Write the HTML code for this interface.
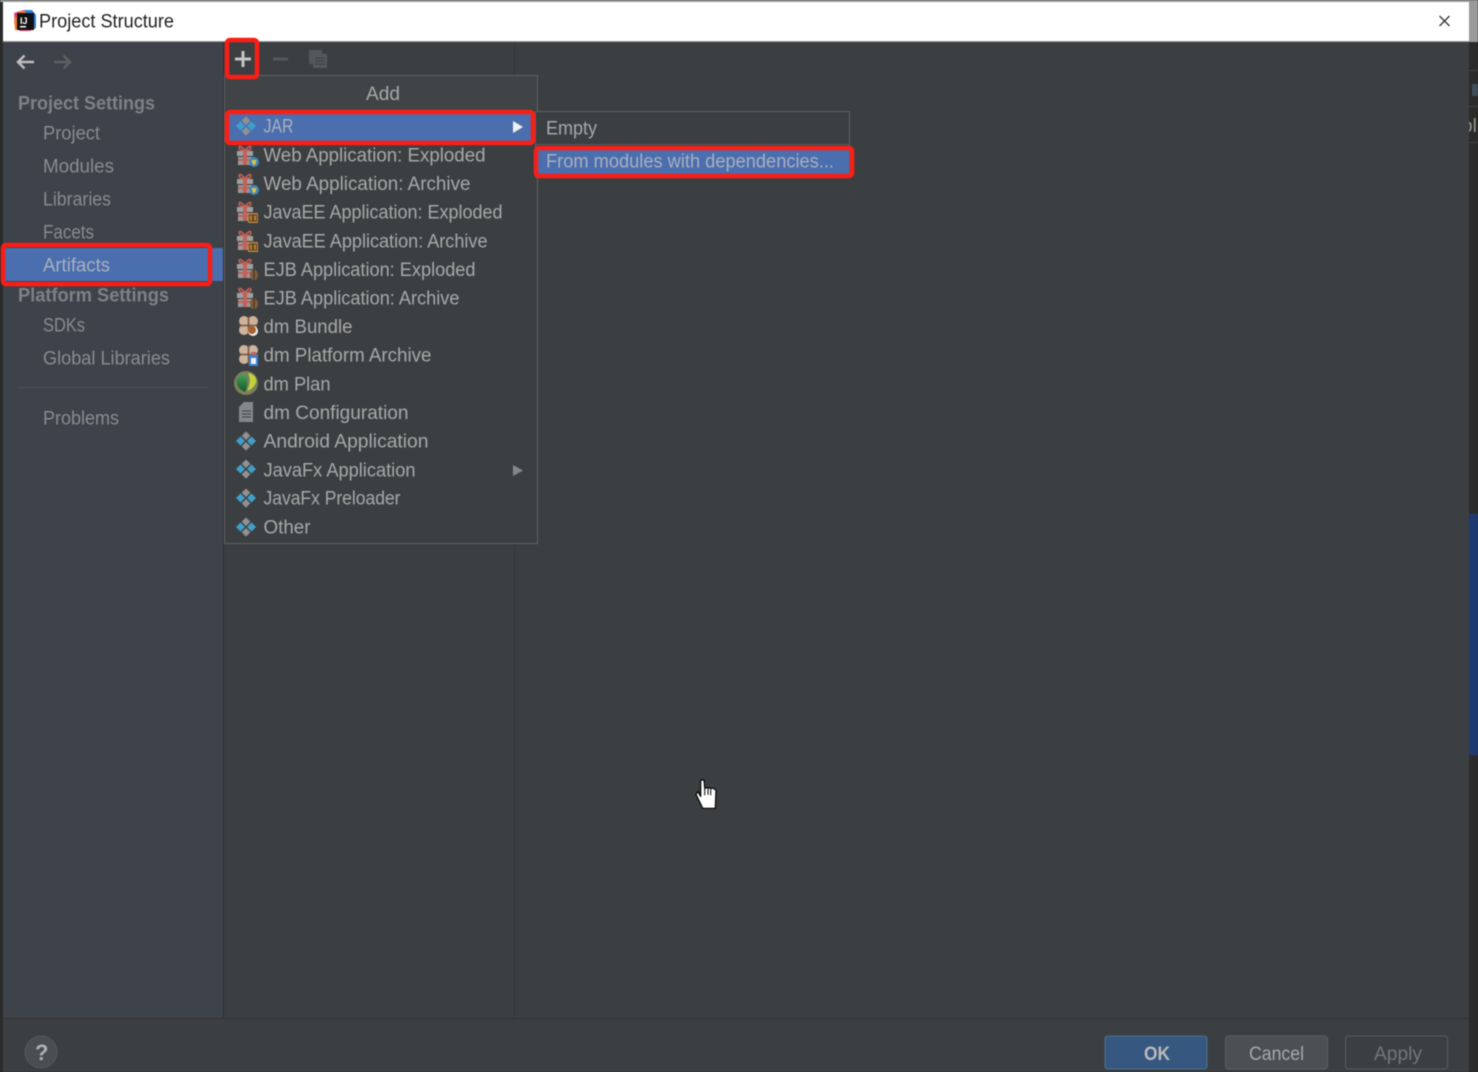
<!DOCTYPE html>
<html lang="en">
<head>
<meta charset="utf-8">
<title>Project Structure</title>
<style>
html,body{margin:0;padding:0;width:1478px;height:1072px;overflow:hidden;background:#2b2b2b}
svg{display:block}
#root{filter:blur(.45px)}
text{font-family:"Liberation Sans",sans-serif;font-size:19px;fill:#a8a8a8}
.d{fill:#8a8c8e}
.h{fill:#7f8184;font-weight:bold}
.s{fill:#a9b0bd}
</style>
</head>
<body>
<svg id="root" width="1478" height="1072" viewBox="0 0 1478 1072" xmlns="http://www.w3.org/2000/svg">
<defs>
<g id="dia">
  <path d="M10 .5l4.300 4.300L10 9.100 5.700 4.800z" fill="#8f9193"/>
  <path d="M10 11l4.300 4.300L10 19.600l-4.300-4.300z" fill="#8f9193"/>
  <path d="M0 10l4.500-4.500L9 10l-4.500 4.500z" fill="#3f9fcb"/>
  <path d="M11 10l4.500-4.500L20 10l-4.500 4.500z" fill="#3f9fcb"/>
</g>
<g id="gift">
  <rect x="0" y="6" width="16" height="5" fill="#a0a0a0"/>
  <rect x="1" y="12" width="14" height="8" fill="#9a9a9a"/>
  <rect x="6" y="6" width="4" height="14" fill="#c2605a"/>
  <rect x="1" y="14" width="14" height="2" fill="#c2605a"/>
  <path d="M8 5.500C4 .5 1 .5 2.500 4c.5 1.200 3.500 1.500 5.500 1.500zM8 5.500c4-5 7-5 5.500-1.500-.5 1.200-3.500 1.500-5.500 1.500z" fill="none" stroke="#c2605a" stroke-width="1.600"/>
</g>
<g id="web">
  <use href="#gift"/>
  <circle cx="17" cy="17" r="5" fill="#3a88c4"/>
  <path d="M14.500 15h5l-1 4-2 1.500-1-2z" fill="#e8c23a"/>
</g>
<g id="ee">
  <use href="#gift"/>
  <rect x="11" y="12" width="10" height="10" fill="#b9843f"/>
  <rect x="12.500" y="14" width="3" height="6" fill="none" stroke="#5a4020" stroke-width="1"/>
  <rect x="16.500" y="14" width="3" height="6" fill="none" stroke="#5a4020" stroke-width="1"/>
</g>
<g id="ejb">
  <use href="#gift"/>
  <ellipse cx="17" cy="17" rx="4" ry="5.500" fill="#7d5c3a"/>
  <path d="M17 11.500v11" stroke="#3c3020" stroke-width="1"/>
</g>
<g id="ball">
  <circle cx="6" cy="5" r="5" fill="#cdb29c"/>
  <circle cx="15" cy="5" r="5" fill="#cdb29c"/>
  <circle cx="6" cy="14" r="5" fill="#cdb29c"/>
  <circle cx="14" cy="13" r="5" fill="#cdb29c"/>
  <path d="M10.500 0v19M1 9.500h19" stroke="#77553f" stroke-width="1.500"/>
</g>
<linearGradient id="gl" x1="0" y1="0" x2="0" y2="1"><stop offset="0" stop-color="#4fa35a"/><stop offset="1" stop-color="#0e5a2a"/></linearGradient>
</defs>

<!-- base -->
<rect width="1478" height="1072" fill="#2b2b2b"/>
<rect x="3" y="42" width="1466" height="1030" fill="#3c3f41"/>
<rect x="3" y="42" width="220" height="976" fill="#3d424b"/>
<rect x="223" y="42" width="1" height="976" fill="#323232"/>
<rect x="514" y="42" width="1" height="976" fill="#343638"/>
<rect x="3" y="1018" width="1466" height="1" fill="#313335"/>

<!-- right strip -->
<rect x="1469" y="514" width="9" height="241" fill="#1f3a70"/>
<rect x="1469" y="0" width="9" height="42" fill="#9a9a9a"/>
<rect x="1472" y="84" width="6" height="12" fill="#3d4f5a"/>
<rect x="1469" y="70" width="9" height="1" fill="#444"/>
<rect x="1469" y="106" width="9" height="1" fill="#444"/>
<rect x="1469" y="142" width="9" height="1" fill="#444"/>
<svg x="1469" y="110" width="9" height="30" viewBox="0 0 9 30"><text x="-7" y="22" style="fill:#9a9488">ol</text></svg>

<!-- title bar -->
<rect x="0" y="0" width="1469" height="2" fill="#9c9c9c"/>
<rect x="3" y="2" width="1466" height="39" fill="#ffffff"/>
<rect x="3" y="41" width="1466" height="1" fill="#9a9a9a"/>
<path d="M14 13l6-2 4-1 4 1 3 1 5 3v13l-6 3H20l-5-3z" fill="#e8407a"/>
<path d="M24 10h8l4 5v12l-4 3z" fill="#2f7fe0"/>
<path d="M14 20l6-9h6l-9 19h-2z" fill="#f4792a"/>
<rect x="17" y="13" width="17" height="17" fill="#111"/>
<text x="20" y="24" style="fill:#fff;font-size:9px;font-weight:bold">IJ</text>
<rect x="20" y="26" width="6" height="1.500" fill="#fff"/>
<text x="39" y="27.500" textLength="135" lengthAdjust="spacingAndGlyphs" style="fill:#222">Project Structure</text>
<path d="M1439.500 16l10 10M1449.500 16l-10 10" stroke="#333" stroke-width="1.300" fill="none"/>

<!-- nav arrows -->
<path d="M34 62H18M24.500 55.500L18 62l6.500 6.500" stroke="#bdbdbd" stroke-width="2.500" fill="none"/>
<path d="M54 62h16M63.500 55.500L70 62l-6.500 6.500" stroke="#5c5f62" stroke-width="2.500" fill="none"/>

<!-- sidebar -->
<rect x="3" y="248" width="220" height="33" fill="#4b6eaf"/>
<text x="18" y="109.500" textLength="137" lengthAdjust="spacingAndGlyphs" class="h">Project Settings</text>
<text x="43" y="139.500" textLength="57" lengthAdjust="spacingAndGlyphs" class="d">Project</text>
<text x="43" y="172.500" textLength="71" lengthAdjust="spacingAndGlyphs" class="d">Modules</text>
<text x="43" y="205.500" textLength="68" lengthAdjust="spacingAndGlyphs" class="d">Libraries</text>
<text x="43" y="238.500" textLength="51" lengthAdjust="spacingAndGlyphs" class="d">Facets</text>
<text x="43" y="271.500" textLength="67" lengthAdjust="spacingAndGlyphs" class="s">Artifacts</text>
<text x="18" y="301.500" textLength="151" lengthAdjust="spacingAndGlyphs" class="h">Platform Settings</text>
<text x="43" y="331.500" textLength="42" lengthAdjust="spacingAndGlyphs" class="d">SDKs</text>
<text x="43" y="364.500" textLength="127" lengthAdjust="spacingAndGlyphs" class="d">Global Libraries</text>
<rect x="18" y="387" width="190" height="1" fill="#4a4e55"/>
<text x="43" y="424.500" textLength="76" lengthAdjust="spacingAndGlyphs" class="d">Problems</text>

<!-- toolbar -->
<path d="M243 51v16M235 59h16" stroke="#c4c4c4" stroke-width="3" fill="none"/>
<path d="M273 59h15" stroke="#55585b" stroke-width="3" fill="none"/>
<path d="M309 50h13v4h5v14h-14v-4h-4z" fill="#55585b"/>
<path d="M315 58h10M315 61h10M315 64h10" stroke="#3c3f41" stroke-width="1"/>

<!-- popup menu -->
<rect x="224.500" y="75.500" width="313" height="468" fill="#3c3f41" stroke="#5e6062"/>
<rect x="225" y="76" width="312" height="34" fill="#414446"/>
<text x="366" y="100" textLength="34" lengthAdjust="spacingAndGlyphs">Add</text>
<rect x="228" y="112" width="305" height="31" fill="#4b6eaf"/>

<use href="#dia" x="236" y="116"/>
<text x="263.500" y="132.500" textLength="30" lengthAdjust="spacingAndGlyphs" class="s">JAR</text>
<path d="M513 121l10 6-10 6z" fill="#f0f0f0"/>

<use href="#web" x="237" y="145"/>
<text x="263.500" y="161.500" textLength="222" lengthAdjust="spacingAndGlyphs">Web Application: Exploded</text>
<use href="#web" x="237" y="173"/>
<text x="263.500" y="190" textLength="207" lengthAdjust="spacingAndGlyphs">Web Application: Archive</text>
<use href="#ee" x="237" y="201"/>
<text x="263.500" y="218.500" textLength="239" lengthAdjust="spacingAndGlyphs">JavaEE Application: Exploded</text>
<use href="#ee" x="237" y="230"/>
<text x="263.500" y="247.500" textLength="224" lengthAdjust="spacingAndGlyphs">JavaEE Application: Archive</text>
<use href="#ejb" x="237" y="258"/>
<text x="263.500" y="276" textLength="212" lengthAdjust="spacingAndGlyphs">EJB Application: Exploded</text>
<use href="#ejb" x="237" y="287"/>
<text x="263.500" y="304.500" textLength="196" lengthAdjust="spacingAndGlyphs">EJB Application: Archive</text>

<use href="#ball" x="238" y="316"/>
<circle cx="253" cy="331" r="5" fill="#f0f0f0"/><circle cx="252" cy="330" r="4" fill="#a5622f"/>
<text x="263.500" y="333" textLength="89" lengthAdjust="spacingAndGlyphs">dm Bundle</text>
<use href="#ball" x="238" y="345"/>
<rect x="249" y="355" width="9" height="11" fill="#3b7fd0"/><rect x="251" y="358" width="5" height="6" fill="#f0f0f0"/><rect x="251" y="352" width="5" height="3" fill="#c2605a"/>
<text x="263.500" y="361.500" textLength="168" lengthAdjust="spacingAndGlyphs">dm Platform Archive</text>

<circle cx="246" cy="383" r="12" fill="#7d7f5c"/>
<path d="M245 373c-7 2-9 6-8 11 1 4 4 6 8 8 3-6 3-13 0-19z" fill="url(#gl)"/>
<path d="M248 373c6 1 9 5 8 9-1 4-4 7-9 9 3-6 4-12 1-18z" fill="#c4d23a"/>
<text x="263.500" y="390.500" textLength="67" lengthAdjust="spacingAndGlyphs">dm Plan</text>

<path d="M244 402h9v20h-14v-15z" fill="#85888a"/>
<path d="M242 411h9M242 414h9M242 417h9" stroke="#3c3f41" stroke-width="1"/>
<text x="263.500" y="419" textLength="145" lengthAdjust="spacingAndGlyphs">dm Configuration</text>

<use href="#dia" x="236" y="431"/>
<text x="263.500" y="447.500" textLength="165" lengthAdjust="spacingAndGlyphs">Android Application</text>
<use href="#dia" x="236" y="459"/>
<text x="263.500" y="476.500" textLength="152" lengthAdjust="spacingAndGlyphs">JavaFx Application</text>
<path d="M513 465l10 5.500-10 5.500z" fill="#85888a"/>
<use href="#dia" x="236" y="488"/>
<text x="263.500" y="504.500" textLength="137" lengthAdjust="spacingAndGlyphs">JavaFx Preloader</text>
<use href="#dia" x="236" y="517"/>
<text x="263.500" y="533.500" textLength="47" lengthAdjust="spacingAndGlyphs">Other</text>

<!-- submenu -->
<rect x="535.500" y="111.500" width="314" height="66" fill="#3c3f41" stroke="#5e6062"/>
<rect x="536" y="144" width="313" height="1" fill="#55585a"/>
<text x="546" y="134.500" textLength="51" lengthAdjust="spacingAndGlyphs">Empty</text>
<rect x="537" y="150" width="312" height="24" fill="#4b6eaf"/>
<text x="546" y="167.500" textLength="288" lengthAdjust="spacingAndGlyphs" class="s">From modules with dependencies...</text>

<!-- red annotation boxes -->
<g fill="none" stroke="#fa1f16" stroke-width="4.500">
  <rect x="227" y="40" width="30" height="37" rx="3"/>
  <rect x="3" y="245" width="207" height="39" rx="3"/>
  <rect x="227" y="112" width="306" height="31" rx="3"/>
  <rect x="536" y="148" width="316" height="28" rx="3"/>
</g>

<!-- hand cursor -->
<path d="M700.700 780h3.300l.7 8.300 3.300-.6 2.700.6h2.600l2.700 2-.7 18h-12.600l-6.700-14 2-2.600 2.700 5z" fill="#fff" stroke="#000" stroke-width="1.200"/>
<path d="M704.700 788.300v7M708 787.700v7M710.700 788.300v7" stroke="#000" stroke-width="1" fill="none"/>

<!-- footer -->
<circle cx="41" cy="1052" r="16" fill="#4b4e50" stroke="#55585a"/>
<text x="35" y="1060" style="font-size:22px;font-weight:bold;fill:#b0b0b0">?</text>

<rect x="1105" y="1036" width="102" height="33" rx="3" fill="#365880" stroke="#4c708c"/>
<text x="1144" y="1060" textLength="26" lengthAdjust="spacingAndGlyphs" style="font-weight:bold;fill:#bbbbbb">OK</text>
<rect x="1225.500" y="1036" width="102" height="33" rx="3" fill="#4c5052" stroke="#5e6060"/>
<text x="1249" y="1060" textLength="55" lengthAdjust="spacingAndGlyphs">Cancel</text>
<rect x="1345.500" y="1036" width="102" height="33" rx="3" fill="#3c3f41" stroke="#5a5d5f"/>
<text x="1374" y="1060" textLength="48" lengthAdjust="spacingAndGlyphs" style="fill:#74777a">Apply</text>
</svg>
</body>
</html>
